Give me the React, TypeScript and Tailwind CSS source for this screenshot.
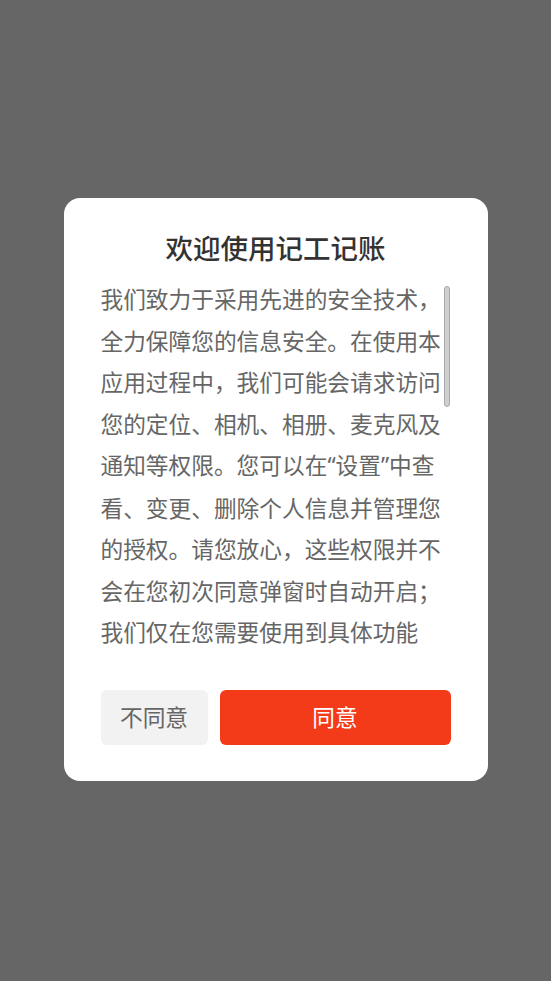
const Q = ({ children }: { children: string }) => (
  <span style={{ fontFamily: '"Noto Sans", sans-serif' }}>{children}</span>
);

const LINES: React.ReactNode[] = [
  "我们致力于采用先进的安全技术，",
  "全力保障您的信息安全。在使用本",
  "应用过程中，我们可能会请求访问",
  "您的定位、相机、相册、麦克风及",
  <>
    通知等权限。您可以在<Q>“</Q>设置<Q>”</Q>中查
  </>,
  "看、变更、删除个人信息并管理您",
  "的授权。请您放心，这些权限并不",
  "会在您初次同意弹窗时自动开启；",
  "我们仅在您需要使用到具体功能",
  "时，才会向您申请相应权限。您可",
  "以阅读完整版《用户协议》和《隐",
  "私政策》了解详细信息。",
];

export default function App() {
  return (
    <div
      className="flex h-[981px] w-full items-center justify-center bg-[#666666]"
      style={{ fontFamily: '"Noto Sans CJK SC", "Noto Sans", sans-serif' }}
    >
      <div className="mt-[-2px] flex w-[424px] flex-col rounded-[16px] bg-white px-[37px] pb-[36px] pt-[31px]">
        <h1 className="text-center text-[27.5px] font-medium leading-[36px] text-[#333333]">
          欢迎使用记工记账
        </h1>

        <div className="relative mt-[13px] h-[375px] overflow-hidden">
          <p className="w-[350px] text-[22.7px] leading-[41.5px] text-[#666666]">
            {LINES.map((line, i) => (
              <span key={i} className="block whitespace-nowrap">
                {line}
              </span>
            ))}
          </p>
          <div className="absolute right-[1px] top-[8px] h-[121px] w-[6px] rounded-full border border-[#a9a9a9] bg-[#cfcfcf]" />
        </div>

        <div className="mt-[37px] flex gap-[12px]">
          <button
            type="button"
            className="h-[55px] w-[107px] rounded-[6px] bg-[#f2f2f2] text-[22.7px] text-[#666666]"
          >
            不同意
          </button>
          <button
            type="button"
            className="h-[55px] flex-1 rounded-[6px] bg-[#f33a19] text-[22.7px] text-white"
          >
            同意
          </button>
        </div>
      </div>
    </div>
  );
}
